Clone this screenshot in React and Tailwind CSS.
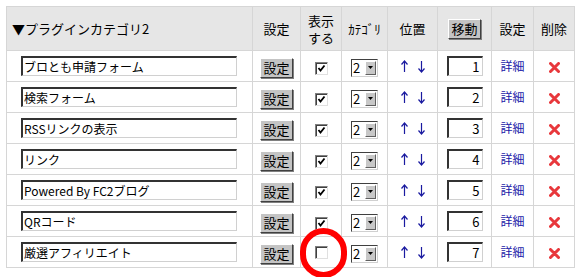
import React from 'react';

const rows = [
  { name: 'ブロとも申請フォーム', show: true, pos: 1 },
  { name: '検索フォーム', show: true, pos: 2 },
  { name: 'RSSリンクの表示', show: true, pos: 3 },
  { name: 'リンク', show: true, pos: 4 },
  { name: 'Powered By FC2ブログ', show: true, pos: 5 },
  { name: 'QRコード', show: true, pos: 6 },
  { name: '厳選アフィリエイト', show: false, pos: 7 },
];

const font = { fontFamily: '"MS PGothic", "Noto Sans CJK JP", sans-serif' };

function SetButton({ label }) {
  return (
    <span className="inline-flex h-[20px] items-center justify-center border border-t-white border-l-white border-b-[#404040] border-r-[#404040] bg-[#c4c4c4] px-[2px] text-[13px] leading-none text-black shadow-[1px_1px_0_#808080]">
      {label}
    </span>
  );
}

function Check({ on }) {
  return (
    <span className="inline-flex h-[13px] w-[13px] items-center justify-center border border-t-[#808080] border-l-[#808080] border-b-[#e0e0e0] border-r-[#e0e0e0] bg-white shadow-[inset_1px_1px_0_#404040]">
      {on && (
        <svg width="9" height="9" viewBox="0 0 9 9">
          <path d="M1.5 4 L3.5 6.5 L7.5 1.5" stroke="#000" strokeWidth="1.8" fill="none" />
        </svg>
      )}
    </span>
  );
}

function Select() {
  return (
    <span className="inline-flex h-[18px] w-[27px] items-stretch border border-t-[#404040] border-l-[#404040] border-b-[#d0d0d0] border-r-[#d0d0d0] bg-white">
      <span className="flex w-[12px] items-center pl-[1px] text-[13px] leading-none">2</span>
      <span className="m-[1px] flex flex-1 items-center justify-center border border-t-white border-l-white border-b-[#606060] border-r-[#606060] bg-[#c8c8c8]">
        <svg width="5" height="3" viewBox="0 0 5 3">
          <path d="M0 0 H5 L2.5 3 Z" fill="#000" />
        </svg>
      </span>
    </span>
  );
}

function Arrow({ down }) {
  return (
    <svg width="7" height="13" viewBox="0 0 7 13" className={down ? 'rotate-180' : ''}>
      <path d="M3.5 1 V12 M0.5 4.5 L3.5 1 L6.5 4.5" stroke="#1a1aa0" strokeWidth="1.2" fill="none" />
    </svg>
  );
}

function Del() {
  return (
    <svg width="11" height="11" viewBox="0 0 11 11">
      <path d="M1.5 1.5 L9.5 9.5 M9.5 1.5 L1.5 9.5" stroke="#e8383c" strokeWidth="3" strokeLinecap="round" />
    </svg>
  );
}

export default function App() {
  const td = 'border border-[#d6d6d6] text-center align-middle';
  const th = 'border border-[#d6d6d6] bg-[#e6e6e6] text-center align-middle font-normal text-[13px] leading-[17px] whitespace-nowrap';
  return (
    <div className="min-h-[277px] bg-white pl-[6px] pt-[6px] text-black" style={font}>
      <div className="relative w-[568px]">
        <table className="w-[568px] table-fixed border-collapse">
          <colgroup>
            <col className="w-[246px]" />
            <col className="w-[48px]" />
            <col className="w-[41px]" />
            <col className="w-[46px]" />
            <col className="w-[50px]" />
            <col className="w-[54px]" />
            <col className="w-[42px]" />
            <col className="w-[41px]" />
          </colgroup>
          <thead>
            <tr className="h-[44px]">
              <th className={th + ' pl-[5px] text-left'}>▼プラグインカテゴリ2</th>
              <th className={th}>設定</th>
              <th className={th}>
                <div>表示</div>
                <div>する</div>
              </th>
              <th className={th + ' text-[12px]'}>ｶﾃｺﾞﾘ</th>
              <th className={th}>位置</th>
              <th className={th}><SetButton label="移動" /></th>
              <th className={th}>設定</th>
              <th className={th}>削除</th>
            </tr>
          </thead>
          <tbody>
            {rows.map((r) => (
              <tr key={r.pos} className="h-[31px]">
                <td className={td + ' pl-[14px] text-left'}>
                  <div className="flex h-[20px] w-[216px] items-center border-t-2 border-l-2 border-b border-r border-t-[#333] border-l-[#333] border-b-[#d0d0d0] border-r-[#d0d0d0] bg-white pl-[1px] text-[12px] leading-none">
                    {r.name}
                  </div>
                </td>
                <td className={td}><SetButton label="設定" /></td>
                <td className={td}><Check on={r.show} /></td>
                <td className={td}><Select /></td>
                <td className={td}>
                  <span className="inline-flex items-center gap-[10px]"><Arrow /><Arrow down /></span>
                </td>
                <td className={td}>
                  <div className="mx-auto flex h-[20px] w-[36px] items-center justify-end border-t-2 border-l-2 border-b border-r border-t-[#333] border-l-[#333] border-b-[#d0d0d0] border-r-[#d0d0d0] bg-white pr-[2px] text-[13px] leading-none">
                    {r.pos}
                  </div>
                </td>
                <td className={td + ' text-[12px] text-[#1a1aa8]'}>詳細</td>
                <td className={td}><span className="inline-flex"><Del /></span></td>
              </tr>
            ))}
          </tbody>
        </table>
        <div className="absolute left-[294px] top-[222px] h-[50px] w-[47px] rounded-full border-[6px] border-[#ff0000]" />
      </div>
    </div>
  );
}
